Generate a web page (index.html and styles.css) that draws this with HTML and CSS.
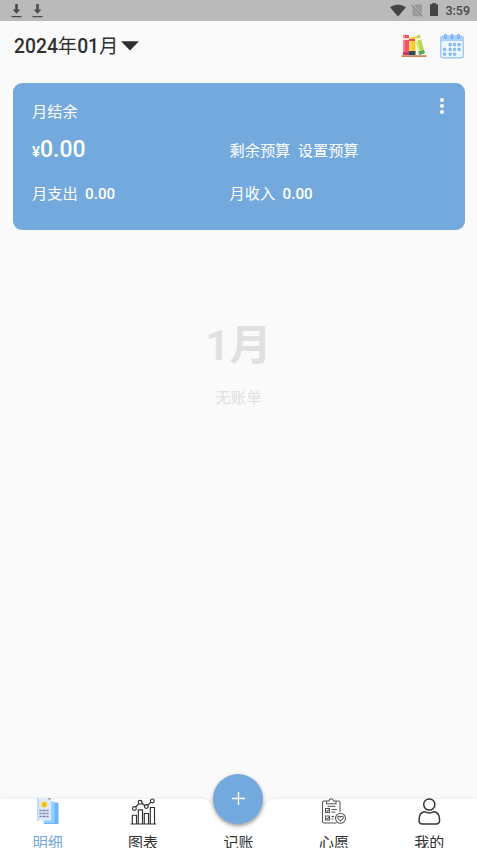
FILE: index.html
```html
<!DOCTYPE html>
<html lang="zh-CN">
<head>
<meta charset="utf-8">
<title>账本</title>
<link rel="stylesheet" href="styles.css">
</head>
<body>
<div class="app">
  <div class="status">
    <div class="status-left">
      <svg width="11" height="14" viewBox="0 0 11 14"><path d="M4.2 0h2.6v5.500H9.300L5.500 9.800 1.700 5.500h2.500zM.5 12h10v1.300H.5z" fill="#4b4b4b"/></svg>
      <svg width="11" height="14" viewBox="0 0 11 14"><path d="M4.200 0h2.600v5.500H9.300L5.500 9.800 1.700 5.500h2.500zM.5 12h10v1.300H.5z" fill="#4b4b4b"/></svg>
    </div>
    <div class="status-right">
      <svg width="16" height="13" viewBox="0 0 16 13"><path d="M0 3.200Q8-2.200 16 3.200L8 12.500z" fill="#454545"/></svg>
      <svg class="sim" width="12" height="13" viewBox="0 0 12 13"><path d="M4 .5h6.800v9.200L3 2zM1.500 4l8 8.300h-8z" fill="#999"/><path d="M.5 1.200l11 11.300" stroke="#808080" stroke-width="1.100"/></svg>
      <svg class="battery" width="8" height="13" viewBox="0 0 8 13"><path d="M2.300 0h3.400v1.300H8V13H0V1.300h2.300z" fill="#454545"/></svg>
      <span class="clock">3:59</span>
    </div>
  </div>

  <header class="header">
    <div class="month"><span><b>2024</b>年<b>01</b>月</span><svg width="18" height="10" viewBox="0 0 18 10"><path d="M0 .3h18L9 9.500z" fill="#303030"/></svg></div>
    <div class="tools">
      <svg width="26" height="24" viewBox="0 0 26 24">
        <path d="M2 1h6v20H2z" fill="#f4516c"/><path d="M2 1h2v20H2z" fill="#ff7c91"/><path d="M2 4h6v2H2z" fill="#ffdce2"/><path d="M2 18h6v3H2z" fill="#c93a5b"/>
        <path d="M8 3h6.500v18H8z" fill="#ffc52e"/><path d="M8 3h2.500v18H8z" fill="#ffe15b"/><path d="M8 5h6.500v2H8z" fill="#e84d68"/><path d="M8 17h6.500v4H8z" fill="#2e4864"/>
        <path d="M13.300 2.400l5.700-1.600 4.800 18.500-5.500 1.600z" fill="#b4d957"/><path d="M13.300 2.400l2-.6L20 20.400l-1.700.5z" fill="#dcf083"/><path d="M14 5l5.700-1.600.6 2-5.700 1.600z" fill="#f3ffd0"/><path d="M17.400 17.500l5.700-1.600.8 3.400-5.600 1.600z" fill="#55a95f"/>
        <path d="M.5 21.200h25V23H.5z" fill="#cf8461"/>
      </svg>
      <svg width="24" height="25" viewBox="0 0 24 25">
        <rect x=".8" y="2.200" width="22.400" height="21.600" rx="2" fill="#eef6ff" stroke="#8fc0fc" stroke-width="1.200"/>
        <path d="M1 7V4q0-2 2-2h18q2 0 2 2v3z" fill="#a8d0ff"/>
        <path d="M5.500 1.500v2M12 1.500v2M18.500 1.500v2" stroke="#6ba8f5" stroke-width="2.800" stroke-linecap="round"/><path d="M5.500 1.500v1M12 1.500v1M18.500 1.500v1" stroke="#b7d8ff" stroke-linecap="round"/>
        <g fill="#9ecaff" stroke="#6ea9f2" stroke-width=".8"><path d="M9 9.500h2.200v2.200H9zM13.500 9.500h2.200v2.200h-2.200zM18 9.500h2.200v2.200H18zM3.500 14.300h2.200v2.200H3.500zM9 14.300h2.200v2.200H9zM13.500 14.300h2.200v2.200h-2.200zM18 14.300h2.200v2.200H18zM3.500 19h2.200v2.200H3.500zM9 19h2.200v2.200H9zM13.500 19h2.200v2.200h-2.200z"/></g>
      </svg>
    </div>
  </header>

  <section class="card">
    <div class="card-head"><span>月结余</span><svg width="4" height="16" viewBox="0 0 4 16"><g fill="#fff"><circle cx="2" cy="2" r="2"/><circle cx="2" cy="8" r="2"/><circle cx="2" cy="14" r="2"/></g></svg></div>
    <div class="row balance">
      <div><span class="yen">¥</span><span class="amount">0.00</span></div>
      <div class="pair"><span>剩余预算</span><span>设置预算</span></div>
    </div>
    <div class="row totals">
      <div class="pair"><span>月支出</span><b>0.00</b></div>
      <div class="pair"><span>月收入</span><b>0.00</b></div>
    </div>
  </section>

  <main class="empty">
    <div class="empty-month">1月</div>
    <div class="empty-text">无账单</div>
  </main>

  <nav class="tabs">
    <svg class="tabs-bg" width="477" height="62" viewBox="0 -12 477 62"><path d="M0 .8H199Q210 .8 212 7C216 20 226 28 238.500 28S261 20 265 7Q267 .8 278 .8H477V60H0Z" fill="#fff"/></svg>
    <a class="tab active">
      <svg width="26" height="28" viewBox="0 0 26 28">
        <path d="M9 4.500h14.500V26H9z" fill="#69b7fb"/><path d="M8.500 3.500h11V25h-11z" fill="#94d1ff"/><path d="M2 0H16v22.500H2z" fill="#dfeafa"/><path d="M2 0h1.700v22.500H2z" fill="#b9dcff"/><path d="M12.500 0h2.800v2.500z" fill="#8293ac"/>
        <circle cx="9.200" cy="6.500" r="3" fill="#ffd51f"/><path d="M10.200 5H8.700v1.500h1.200V8H8.200" fill="none" stroke="#d99c16" stroke-width=".7"/>
        <path d="M4.400 12.500h10M4.400 15.500h10M4.400 18.500h10" stroke="#7d8ba7" stroke-width="1.500" stroke-dasharray="2.300 .7 3.300 .6"/>
      </svg><span>明细</span></a>
    <a class="tab">
      <svg width="26" height="28" viewBox="0 0 26 28"><g fill="none" stroke="#303030" stroke-width="1.150"><path d="M.5 26H26M2.300 26v-8.800h4.200V26M8.300 26V11.800h4.200V26M14.300 26V15.500h4.200V26M20.300 26V9.500h4.200V26M5.800 9l3.300-3.700M11.500 5l3.700 3M17.800 7.300L21 4"/><circle cx="4.400" cy="10.500" r="1.900"/><circle cx="10.200" cy="4.300" r="1.900"/><circle cx="16.300" cy="8.500" r="1.900"/><circle cx="22.300" cy="2.900" r="1.900"/></g></svg><span>图表</span></a>
    <a class="tab">
      <span class="add"><svg width="13" height="13" viewBox="0 0 13 13"><path d="M6.500 0v13M0 6.500h13" stroke="#fff" stroke-width="1.400"/></svg></span>
      <span>记账</span></a>
    <a class="tab">
      <svg width="26" height="28" viewBox="0 0 26 28"><g fill="none" stroke="#555" stroke-width="1.050"><path d="M6 3H3Q1.500 3 1.500 4.500v19Q1.500 25 3 25h12.500M14.500 3h2.800q1.700 0 1.700 1.500v9.500M5.500 5.800V3H8q.3-2.300 2.200-2.300T12.500 3H15v2.800zM6.500 8.300h8"/><path d="M4.500 10.500h4v4h-4zM4.500 18h4v4h-4zM10.500 11.500H16M10.500 14h4M10.500 18.500h2.500M10.500 21h2"/><path d="M5.500 12.300l1 1L8 11.500M5.500 20l1 1L8 19"/><circle cx="19.500" cy="20.300" r="5"/><path d="M19.500 23l-2.700-2.700c-.8-2 1.700-2.900 2.700-1.200 1-1.700 3.500-.8 2.700 1.200z"/></g></svg><span>心愿</span></a>
    <a class="tab">
      <svg width="26" height="28" viewBox="0 0 26 28"><g fill="none" stroke="#363636" stroke-width="1.500"><circle cx="13.300" cy="6.500" r="5.600"/><path d="M8.700 13.700C5 14 3 17.300 3 22.300Q3 26 6.500 26h13.600q3.500 0 3.500-3.700c0-5-2-8.300-5.700-8.600-3.200 1.900-6 1.900-9.200 0z"/></g></svg><span>我的</span></a>
  </nav>
</div>
</body>
</html>
```
FILE: styles.css
```css
* { box-sizing: border-box; }
body { margin: 0; background: #fafafa; color: #303030; font-family: Roboto, "Noto Sans CJK SC", sans-serif; }
svg { display: block; flex: none; }
b { font-weight: 500; }
.app { width: 477px; height: 848px; display: flex; flex-direction: column; overflow: hidden; }
.status { height: 21px; flex: none; background: #bababa; display: flex; justify-content: space-between; padding: 4px 7px 0 10.5px; }
.status-left { display: flex; gap: 10px; }
.status-right { display: flex; }
.sim { margin-left: 5px; }
.battery { margin-left: 7px; margin-top: -1px; }
.clock { margin-left: 7px; font-size: 12.5px; line-height: 14px; font-weight: 500; color: #484848; }
.header { height: 50px; flex: none; display: flex; align-items: center; justify-content: space-between; padding: 0 13.5px 0 14px; }
.month { display: flex; align-items: center; gap: 3px; font-size: 19.3px; line-height: 28px; white-space: nowrap; }
.month span { padding-top: 2px; }
.tools { display: flex; align-items: center; gap: 13px; }
.card { height: 147px; flex: none; margin: 12px 12.5px 0; padding: 16px 20.5px 0 19.5px; border-radius: 9px; background: #74a9dd; color: #fff; font-size: 15.2px; line-height: 26px; }
.card-head { display: flex; justify-content: space-between; }
.card-head svg { margin-top: -1px; }
.row { display: grid; grid-template-columns: 197.5px 1fr; align-items: center; }
.balance { height: 45px; margin-top: 3px; }
.yen { font-size: 15px; font-weight: 500; }
.amount { font-size: 23px; font-weight: 500; }
.totals { height: 42px; }
.pair { display: flex; gap: 7.5px; }
.empty { flex: 1; display: flex; flex-direction: column; align-items: center; color: #e0e0e0; padding-top: 86px; }
.empty-month { font-size: 42px; line-height: 60px; font-weight: 700; }
.empty-text { margin-top: 9px; font-size: 15.3px; line-height: 26px; }
.tabs { position: relative; height: 50px; flex: none; display: grid; grid-template-columns: repeat(5, 1fr); }
.tabs-bg { position: absolute; left: 0; top: -12px; filter: drop-shadow(0 -1px 1px rgba(0, 0, 0, .06)); }
.tab { position: relative; display: flex; flex-direction: column; align-items: center; justify-content: flex-start; font-size: 15px; line-height: 22px; }
.tab > span:last-child { margin-top: 6px; }
.active { color: #74a9dd; }
.add { width: 50px; height: 50px; margin: -24.5px 0 2.5px; border-radius: 50%; background: #74a9dd; display: flex; align-items: center; justify-content: center; box-shadow: 0 2px 4px rgba(0, 0, 0, .35); }
```
